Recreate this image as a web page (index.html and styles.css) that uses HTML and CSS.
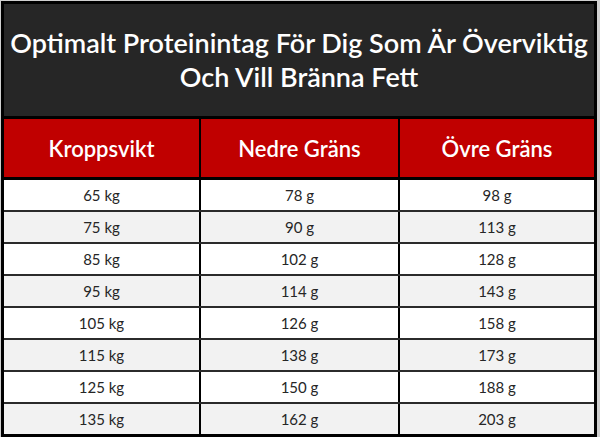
FILE: index.html
```html
<!DOCTYPE html>
<html lang="sv">
<head>
<meta charset="utf-8">
<link rel="stylesheet" href="styles.css">
</head>
<body>
<div class="table">
  <div class="title">Optimalt Proteinintag För Dig Som Är Överviktig<br>Och Vill Bränna Fett</div>
  <div class="row head">
    <div class="cell c1">Kroppsvikt</div>
    <div class="cell c2">Nedre Gräns</div>
    <div class="cell c3">Övre Gräns</div>
  </div>
  <div class="row odd"><div class="cell c1">65 kg</div><div class="cell c2">78 g</div><div class="cell c3">98 g</div></div>
  <div class="row even"><div class="cell c1">75 kg</div><div class="cell c2">90 g</div><div class="cell c3">113 g</div></div>
  <div class="row odd"><div class="cell c1">85 kg</div><div class="cell c2">102 g</div><div class="cell c3">128 g</div></div>
  <div class="row even"><div class="cell c1">95 kg</div><div class="cell c2">114 g</div><div class="cell c3">143 g</div></div>
  <div class="row odd"><div class="cell c1">105 kg</div><div class="cell c2">126 g</div><div class="cell c3">158 g</div></div>
  <div class="row even"><div class="cell c1">115 kg</div><div class="cell c2">138 g</div><div class="cell c3">173 g</div></div>
  <div class="row odd"><div class="cell c1">125 kg</div><div class="cell c2">150 g</div><div class="cell c3">188 g</div></div>
  <div class="row even last"><div class="cell c1">135 kg</div><div class="cell c2">162 g</div><div class="cell c3">203 g</div></div>
</div>
</body>
</html>
```
FILE: styles.css
```css
html, body {
  margin: 0;
  padding: 0;
  background: #cfcfcf;
  font-family: Lato, "Open Sans", sans-serif;
}
.table {
  width: 590px;
  margin: 1px 0 0 1px;
  border: 3px solid #000;
  background: #000;
}
.title {
  height: 112px;
  background: #262626;
  color: #fff;
  font-size: 27px;
  font-weight: 600;
  line-height: 34px;
  text-align: center;
  display: flex;
  align-items: center;
  justify-content: center;
  border-bottom: 3px solid #000;
  white-space: nowrap;
}
.row {
  display: flex;
  height: 30px;
  border-bottom: 2px solid #2b2b2b;
}
.row.last {
  border-bottom: 0;
}
.row.head {
  height: 58px;
  background: #c00000;
  border-bottom: 3px solid #000;
}
.odd { background: #fff; }
.even { background: #f2f2f2; }
.cell {
  display: flex;
  align-items: center;
  justify-content: center;
  font-size: 15px;
  color: #262626;
}
.c1 { width: 195px; }
.c2 { width: 197px; border-left: 2px solid #000; }
.c3 { width: 194px; border-left: 2px solid #000; }
.head .cell {
  color: #fff;
  font-size: 22px;
  font-weight: 600;
}
```
